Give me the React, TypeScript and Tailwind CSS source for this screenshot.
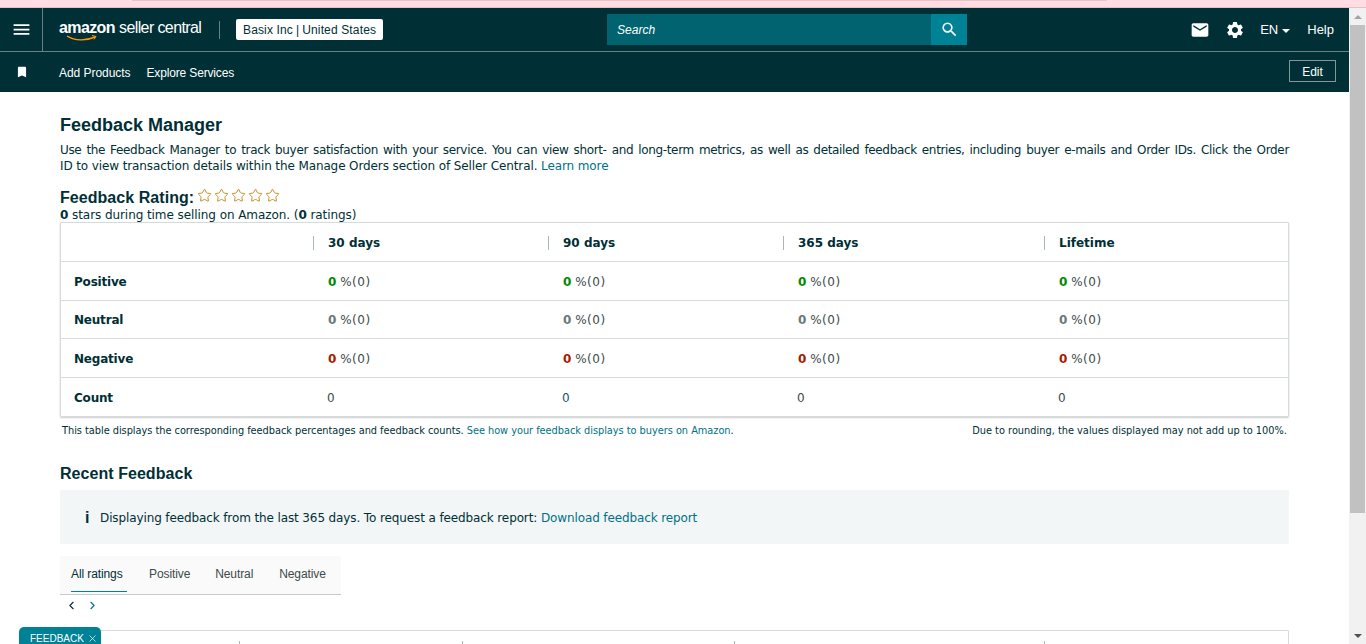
import { ChevronLeft, ChevronRight, Star, X } from "lucide-react";
import { MdBookmark, MdEmail, MdMenu, MdSearch, MdSettings } from "react-icons/md";

const sans = "font-['Liberation_Sans',Arial,sans-serif]";
const verdana = "font-['DejaVu_Sans',Verdana,sans-serif]";

const Stat = ({ tone }: { tone: string }) => (
  <span>
    <b className={tone}>0</b> <span className="tracking-[0.5px]">%(0)</span>
  </span>
);

const rows = [
  { label: "Positive", tone: "text-[#008a00]", h: "h-[39px] pt-[2px]" },
  { label: "Neutral", tone: "text-[#6c7778]", h: "h-[38px]" },
  { label: "Negative", tone: "text-[#a61b00]", h: "h-[39px] pt-[2px]" },
];

const columns = ["30 days", "90 days", "365 days", "Lifetime"];
const gridCols = "grid grid-cols-[252px_235px_235px_261px_1fr]";

const FeedbackTable = () => (
  <div className="rounded-[1px] border border-[#d5dbdb] text-[12px] text-[#002f36] shadow-[0_1px_2px_rgba(0,0,0,0.2)]">
    <div className={`${gridCols} h-[38px] items-center pt-[2px] font-bold`}>
      <div />
      {columns.map((c) => (
        <div key={c} className="flex h-[14px] items-center border-l border-[#aab7b8] pl-[14px]">
          {c}
        </div>
      ))}
    </div>
    {rows.map((r) => (
      <div key={r.label} className={`${gridCols} ${r.h} items-center border-t border-[#d5dbdb]`}>
        <div className="pl-[13px] font-bold tracking-[-0.2px]">{r.label}</div>
        {columns.map((c) => (
          <div key={c} className="pl-[15px] text-[#3d4a4b]">
            <Stat tone={r.tone} />
          </div>
        ))}
      </div>
    ))}
    <div className={`${gridCols} h-[39px] items-center border-t border-[#d5dbdb] pt-[2px]`}>
      <div className="pl-[13px] font-bold tracking-[-0.2px]">Count</div>
      {columns.map((c, i) => (
        <div key={c} className={`pl-[14px] ${i === 1 ? "text-[#0e5a6a]" : "text-[#3d4a4b]"}`}>
          0
        </div>
      ))}
    </div>
  </div>
);

const Header = () => (
  <header className={`bg-[#002f36] text-white ${sans}`}>
    <div className="flex h-[44px] items-center border-b border-[#6b8083]">
      <div className="flex h-full w-[43px] items-center justify-center border-r border-[#6b8083]">
        <MdMenu size={21} />
      </div>
      <div className="ml-[16px] flex w-[144px] flex-col">
        <div className="flex items-baseline whitespace-nowrap text-[16px] leading-[18px]">
          <span className="font-bold tracking-[-0.6px]">amazon</span>
          <span className="ml-[4px] tracking-[-0.6px]">seller central</span>
        </div>
        <svg width="32" height="6" viewBox="0 0 32 6" className="-mt-[2px] ml-[7px]" aria-hidden="true">
          <path d="M1 1c8 5 19 5 28 1" fill="none" stroke="#f90" strokeWidth="1.4" />
          <path d="M26 0.5l4 1-2 3" fill="none" stroke="#f90" strokeWidth="1" />
        </svg>
      </div>
      <div className="ml-[16px] h-[18px] w-px bg-[#6b8083]" />
      <div className="ml-[16px] flex h-[21px] items-center whitespace-nowrap rounded-[2px] bg-white px-[7px] text-[12px] tracking-[0.14px] text-[#002f36]">
        <span className="font-medium">Basix Inc</span>
        <span className="mx-[3px]">|</span>
        <span>United States</span>
      </div>
      <div className="ml-[224px] flex h-[31px] w-[360px]">
        <div className="flex flex-1 items-center bg-[#00636f] pl-[10px] text-[12px] italic">Search</div>
        <div className="flex w-[36px] items-center justify-center bg-[#008296]">
          <MdSearch size={19} />
        </div>
      </div>
      <div className="ml-auto flex items-center pr-[15px] text-[13px]">
        <MdEmail size={20} />
        <MdSettings size={20} className="ml-[15px]" />
        <span className="ml-[15px]">EN</span>
        <span className="ml-[4px] mt-[2px] h-0 w-0 border-x-[4px] border-t-[4px] border-x-transparent border-t-white" />
        <span className="ml-[17px]">Help</span>
      </div>
    </div>
    <div className="flex h-[40px] items-center">
      <MdBookmark size={14} className="-mt-[1px] ml-[15px]" />
      <span className="ml-[30px] mt-[2px] text-[12px] font-medium tracking-[-0.05px]">Add Products</span>
      <span className="ml-[16px] mt-[2px] text-[12px] font-medium tracking-[-0.15px]">Explore Services</span>
      <div className="ml-auto mr-[13px] -mt-[2px] flex h-[22px] w-[47px] items-center justify-center border border-[#879596] pt-[2px] text-[12px]">
        Edit
      </div>
    </div>
  </header>
);

const Scrollbar = () => (
  <div className="flex w-[17px] flex-col items-center bg-[#f1f1f1]">
    <div className="mt-[7px] h-0 w-0 border-x-[4px] border-b-[4px] border-x-transparent border-b-[#a3a3a3]" />
    <div className="mt-[6px] h-[488px] w-[15px] bg-[#c1c1c1]" />
    <div className="mb-[6px] mt-auto h-0 w-0 border-x-[4px] border-t-[4px] border-x-transparent border-t-[#505050]" />
  </div>
);

const App = () => {
  return (
    <div className="relative flex h-[644px] w-[1366px] flex-col overflow-hidden bg-white">
      <div className="h-[8px] shrink-0 border-b border-[#dcc4c9] bg-[#ffdde3]">
        <div className="ml-[132px] h-px w-[975px] bg-[#eac4cc]" />
      </div>
      <div className="flex min-h-0 flex-1">
        <div className="min-w-0 flex-1">
          <Header />
          <main className={`px-[60px] text-[#002f36] ${verdana}`}>
            <h1 className={`pt-[23px] text-[18px] font-bold leading-[20px] ${sans}`}>Feedback Manager</h1>
            <p className="mt-[7px] text-[12px] leading-[16px]">
              <span className="block tracking-[-0.34px] [text-align-last:justify]">
                Use the Feedback Manager to track buyer satisfaction with your service. You can view short- and
                long-term metrics, as well as detailed feedback entries, including buyer e-mails and Order IDs. Click
                the Order
              </span>
              <span className="block tracking-[-0.11px]">
                ID to view transaction details within the Manage Orders section of Seller Central.{" "}
                <a className="text-[#007185]">Learn more</a>
              </span>
            </p>
            <div className="mt-[14px] flex items-end">
              <h2 className={`text-[16px] font-bold leading-[18px] tracking-[0.05px] ${sans}`}>Feedback Rating:</h2>
              <div className="mb-[4px] ml-[3px] flex gap-[2px]">
                {[0, 1, 2, 3, 4].map((i) => (
                  <Star key={i} size={15} strokeWidth={1.5} className="text-[#c08a20]" />
                ))}
              </div>
            </div>
            <p className="mt-px text-[12px] leading-[14px] tracking-[-0.07px]">
              <b>0</b> stars during time selling on Amazon. (<b>0</b> ratings)
            </p>
            <FeedbackTable />
            <div className="mt-[8px] flex justify-between px-[2px] text-[9.8px] leading-[12px]">
              <p className="tracking-[-0.03px]">
                This table displays the corresponding feedback percentages and feedback counts.{" "}
                <a className="text-[#007185]">See how your feedback displays to buyers on Amazon</a>.
              </p>
              <p>Due to rounding, the values displayed may not add up to 100%.</p>
            </div>
            <h2 className={`mt-[28px] text-[16px] font-bold leading-[18px] tracking-[0.05px] ${sans}`}>Recent Feedback</h2>
            <div className="mt-[7px] flex h-[54px] items-center bg-[#f3f6f6] pl-[25px] pt-[2px] text-[12px] tracking-[-0.115px]">
              <span className={`w-[15px] text-[16px] font-bold ${sans}`}>i</span>
              <span>
                Displaying feedback from the last 365 days. To request a feedback report:{" "}
                <a className="text-[#007185]">Download feedback report</a>
              </span>
            </div>
            <div className={`mt-[12px] flex h-[39px] w-[281px] items-stretch border-b border-[#c4c8c8] bg-[#fafafa] text-[12px] tracking-[-0.1px] ${sans}`}>
              <div className="mb-[2px] ml-[11px] flex w-[56px] items-center border-b border-[#008296]">All ratings</div>
              <div className="mb-[2px] ml-[22px] flex items-center text-[#3d4a4b]">Positive</div>
              <div className="mb-[2px] ml-[25px] flex items-center text-[#3d4a4b]">Neutral</div>
              <div className="mb-[2px] ml-[26px] flex items-center text-[#3d4a4b]">Negative</div>
            </div>
            <div className="mt-[3px] flex h-[14px] items-center pl-[5px]">
              <ChevronLeft size={13} strokeWidth={2} className="text-[#002f36]" />
              <ChevronRight size={13} strokeWidth={2} className="ml-[8px] text-[#007185]" />
            </div>
            <div className="mt-[18px] h-[60px] rounded-[1px] border border-[#d5dbdb] pt-[10px]">
              <div className="grid h-[14px] grid-cols-[178px_223px_272px_310px_1fr]">
                <div />
                <div className="border-l border-[#aab7b8]" />
                <div className="border-l border-[#aab7b8]" />
                <div className="border-l border-[#aab7b8]" />
                <div className="border-l border-[#aab7b8]" />
              </div>
            </div>
          </main>
        </div>
        <Scrollbar />
      </div>
      <div className={`absolute bottom-0 left-[19px] flex h-[17px] w-[82px] items-center gap-[3px] rounded-t-[5px] bg-[#008296] pl-[11px] pt-[5px] text-[10px] text-white ${sans}`}>
        FEEDBACK <X size={11} strokeWidth={1.5} />
      </div>
    </div>
  );
};

export default App;
